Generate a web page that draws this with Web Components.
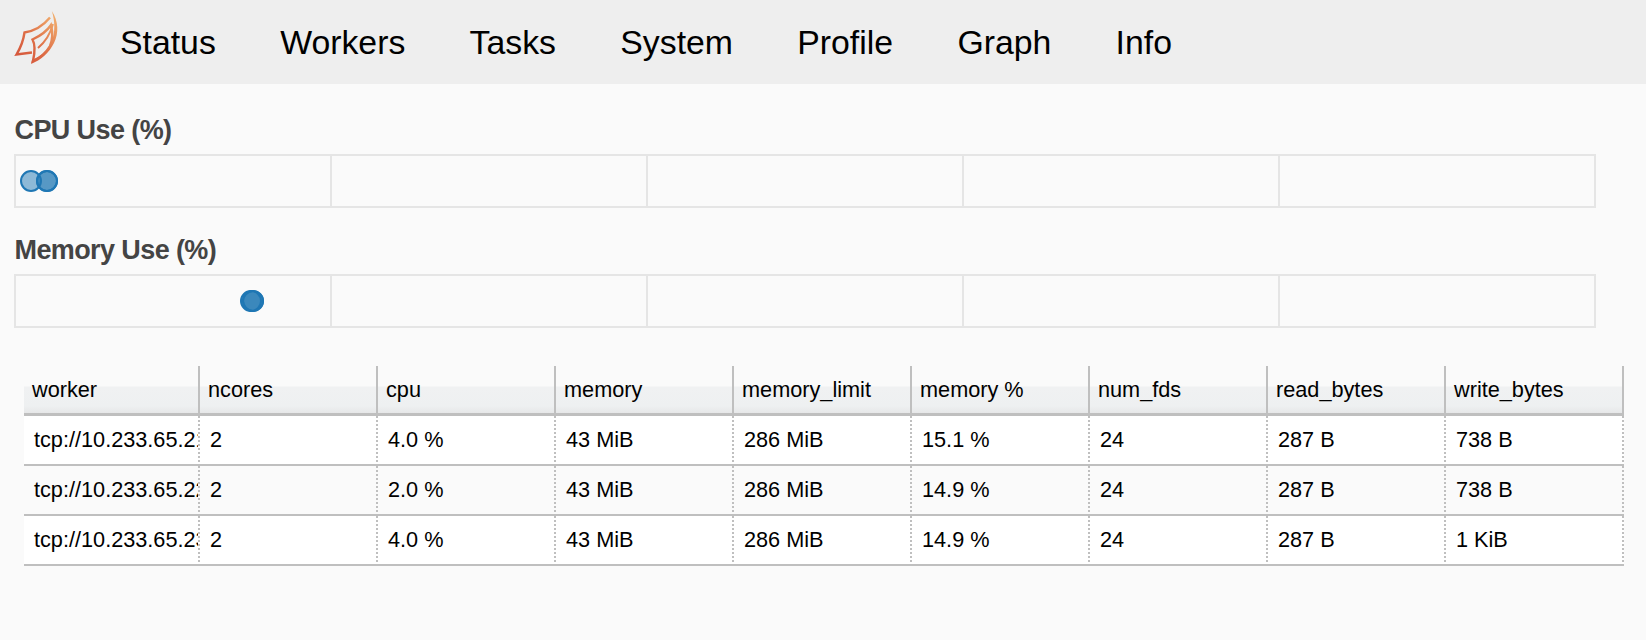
<!DOCTYPE html>
<html>
<head>
<meta charset="utf-8">
<title>Dask</title>
<style>
  html, body { margin: 0; height: 640px; overflow: hidden; background: #fafafa; font-family: "Liberation Sans", Arial, sans-serif; }
</style>
</head>
<body>
<main-nav>
  <nav-link>Status</nav-link>
  <nav-link>Workers</nav-link>
  <nav-link>Tasks</nav-link>
  <nav-link>System</nav-link>
  <nav-link>Profile</nav-link>
  <nav-link>Graph</nav-link>
  <nav-link>Info</nav-link>
</main-nav>
<use-plot title="CPU Use (%)" points="30,46.7,46.7"></use-plot>
<use-plot title="Memory Use (%)" points="250,252,252"></use-plot>
<worker-table></worker-table>

<script>
const navTemplate = document.createElement("template")
navTemplate.innerHTML = `
  <style>
    :host { display: flex; align-items: center; height: 84px; margin-bottom: 4px; background: #eee; }
    svg { display: block; flex: none; width: 120px; height: 84px; }
    .links { display: flex; gap: 64.3px; }
  </style>
  <svg viewBox="0 0 120 84">
    <defs>
      <linearGradient id="flame" gradientUnits="userSpaceOnUse" x1="15" y1="60" x2="57" y2="20">
        <stop offset="0" stop-color="#d4533a"/>
        <stop offset="0.45" stop-color="#dd6c45"/>
        <stop offset="1" stop-color="#f0ab6c"/>
      </linearGradient>
    </defs>
    <g fill="none" stroke="url(#flame)" stroke-width="2.4">
      <path d="M32 52.5 L16.5 54.5 C21 47 23.5 40 24.5 32.5 C34 31 43 26 50 17.5"/>
      <path d="M32.5 39.5 C35 44 35.5 50 33 61 C40 58 46 53 50 46 C52.5 40 52.5 31 51 25 C47 31 40 36 32.5 39.5 Z"/>
      <path d="M38 48 C44 43 50 35 53 24" stroke-width="2"/>
    </g>
    <path fill="url(#flame)" d="M51.8 11 C58.5 21 59 33 54 43 C49 53 41 60 31 64 L32 60 C41 56 48 50 51.5 42 C55.5 32 55 21 51.8 11 Z"/>
  </svg>
  <div class="links"><slot></slot></div>
`
class MainNav extends HTMLElement {
  constructor(){
    super()
    this.attachShadow({ mode: "open" }).appendChild(navTemplate.content.cloneNode(true))
  }
}
customElements.define("main-nav", MainNav)

const linkTemplate = document.createElement("template")
linkTemplate.innerHTML = `
  <style>
    :host { display: block; font-size: 33.8px; color: #000; line-height: 40px; }
  </style>
  <slot></slot>
`
class NavLink extends HTMLElement {
  constructor(){
    super()
    this.attachShadow({ mode: "open" }).appendChild(linkTemplate.content.cloneNode(true))
  }
}
customElements.define("nav-link", NavLink)

const plotTemplate = document.createElement("template")
plotTemplate.innerHTML = `
  <style>
    :host { display: block; margin: 0 0 0 14px; width: 1582px; padding-top: 24px; }
    h2 { margin: 0 0 0 0.5px; font-size: 27px; line-height: 36px; height: 42px; font-weight: bold; color: #444; letter-spacing: -0.6px; }
    .frame { position: relative; display: grid; grid-template-columns: repeat(4, 316px) 314px; height: 50px; border: 2px solid #e5e5e5; width: 1578px; }
    .cell { border-right: 2px solid #e5e5e5; box-sizing: border-box; }
    .cell:nth-child(5) { border-right: 0; }
    .dot { position: absolute; top: 13.8px; width: 18px; height: 18px; margin-left: -11px; border: 2px solid #1f77b4; border-radius: 50%; background: rgba(31,119,180,0.5); }
  </style>
  <h2></h2>
  <div class="frame">
    <div class="cell"></div><div class="cell"></div><div class="cell"></div><div class="cell"></div><div class="cell"></div>
  </div>
`
class UsePlot extends HTMLElement {
  constructor(){
    super()
    this.attachShadow({ mode: "open" }).appendChild(plotTemplate.content.cloneNode(true))
  }
  connectedCallback(){
    this.shadowRoot.querySelector("h2").textContent = this.getAttribute("title")
    const frame = this.shadowRoot.querySelector(".frame")
    for (const p of this.getAttribute("points").split(",")) {
      const dot = document.createElement("div")
      dot.className = "dot"
      dot.style.left = (parseFloat(p) - 15.5) + "px"
      frame.appendChild(dot)
    }
  }
}
customElements.define("use-plot", UsePlot)

const columns = ["worker", "ncores", "cpu", "memory", "memory_limit", "memory %", "num_fds", "read_bytes", "write_bytes"]
const rows = [
  ["tcp://10.233.65.21", "2", "4.0 %", "43 MiB", "286 MiB", "15.1 %", "24", "287 B", "738 B"],
  ["tcp://10.233.65.22", "2", "2.0 %", "43 MiB", "286 MiB", "14.9 %", "24", "287 B", "738 B"],
  ["tcp://10.233.65.23", "2", "4.0 %", "43 MiB", "286 MiB", "14.9 %", "24", "287 B", "1 KiB"]
]

const tableTemplate = document.createElement("template")
tableTemplate.innerHTML = `
  <style>
    :host { display: block; margin: 38px 0 0 24px; width: 1602px; font-size: 21.7px; color: #000; }
    .grid { display: grid; grid-template-columns: 176px repeat(8, 178px); }
    .head { height: 50px; box-sizing: border-box; padding: 9.5px 0 0 8px; line-height: 27px; border-right: 2px solid #bfbfbf; border-bottom: 3px solid #bfbfbf;
      background: linear-gradient(to bottom, #fafafa 0, #fafafa 20px, #f0f1f2 21px, #eef0f1 40px, #e6e7e8 47px); overflow: hidden; white-space: nowrap; }
    .cell { height: 50px; box-sizing: border-box; padding: 10px 0 0 10px; line-height: 27px; border-right: 2px dotted #bfbfbf; border-bottom: 2px solid #bfbfbf; overflow: hidden; white-space: nowrap; background: #fff; }
    .cell.alt { background: #fafafa; }
  </style>
  <div class="grid"></div>
`
class WorkerTable extends HTMLElement {
  constructor(){
    super()
    this.attachShadow({ mode: "open" }).appendChild(tableTemplate.content.cloneNode(true))
  }
  connectedCallback(){
    const grid = this.shadowRoot.querySelector(".grid")
    for (const c of columns) {
      const head = document.createElement("div")
      head.className = "head"
      head.textContent = c
      grid.appendChild(head)
    }
    rows.forEach((row, i) => {
      for (const value of row) {
        const cell = document.createElement("div")
        cell.className = i == 1 ? "cell alt" : "cell"
        cell.textContent = value
        grid.appendChild(cell)
      }
    })
  }
}
customElements.define("worker-table", WorkerTable)
</script>
</body>
</html>
